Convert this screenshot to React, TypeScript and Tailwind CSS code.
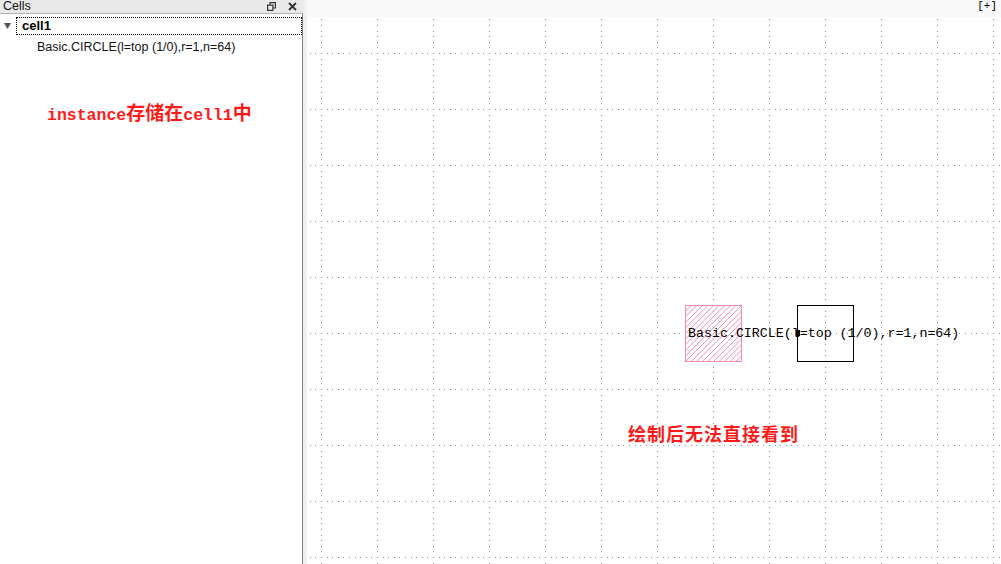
const GridPattern = () => (
  <svg className="absolute inset-0 h-full w-full" xmlns="http://www.w3.org/2000/svg">
    <defs>
      <pattern id="grid" x="14" y="36" width="56" height="56" patternUnits="userSpaceOnUse">
        {Array.from({ length: 10 }).map((_, i) => (
          <rect key={`v${i}`} x={0} y={Math.round(i * 5.6)} width={1} height={1} fill="#8a8a8a" />
        ))}
        {Array.from({ length: 10 }).map((_, i) => (
          <rect key={`h${i}`} x={Math.round(i * 5.6)} y={0} width={1} height={1} fill="#8a8a8a" />
        ))}
      </pattern>
    </defs>
    <rect width="100%" height="100%" fill="url(#grid)" />
  </svg>
);

const HatchBox = () => (
  <svg className="absolute left-[378px] top-[288px]" width="57" height="57">
    <defs>
      <clipPath id="boxclip">
        <rect x="0" y="0" width="57" height="57" />
      </clipPath>
    </defs>
    <g clipPath="url(#boxclip)" stroke="#f08cb0" strokeWidth="1">
      {Array.from({ length: 22 }).map((_, i) => {
        const x = -56 + i * 5.6;
        return <line key={i} x1={x} y1={57} x2={x + 57} y2={0} />;
      })}
    </g>
    <rect x="0.5" y="0.5" width="56" height="56" fill="none" stroke="#f08cb0" strokeWidth="1" />
  </svg>
);

const RestoreIcon = () => (
  <svg width="9" height="9" viewBox="0 0 9 9" fill="none" stroke="#333" strokeWidth="1.2">
    <rect x="0.6" y="3.1" width="5.3" height="5.3" />
    <path d="M3 3V0.6h5.4V6H6" />
  </svg>
);

const CloseIcon = () => (
  <svg width="9" height="9" viewBox="0 0 9 9" stroke="#333" strokeWidth="1.8">
    <path d="M1 1l7 7M8 1L1 8" />
  </svg>
);

const CellsPanel = () => (
  <div className="flex w-[303px] shrink-0 flex-col bg-white">
    <div className="flex h-[14px] items-center justify-between border-b border-[#b4b4b4] bg-[#e9e9e9] pl-[3px] pr-[6px]">
      <span className="text-[12.5px] leading-none text-[#111]">Cells</span>
      <div className="flex items-center gap-[12px]">
        <RestoreIcon />
        <CloseIcon />
      </div>
    </div>
    <div className="relative flex-1 border-r border-[#7f7f7f] pt-[3px]">
      <div className="flex items-center">
        <svg className="ml-[4px] mr-[5px]" width="7" height="6" viewBox="0 0 7 6">
          <path d="M0 0h7L3.5 6z" fill="#555" />
        </svg>
        <div className="h-[18px] flex-1 border border-dotted border-black pl-[5px] text-[13px] font-bold leading-[16px] text-black">
          cell1
        </div>
      </div>
      <div className="mt-[4px] pl-[37px] text-[12.5px] leading-[16px] text-[#111]">Basic.CIRCLE(l=top (1/0),r=1,n=64)</div>
      <div className="mt-[46px] pl-[47px] font-bold leading-[22px] text-[#ff1a1a]">
        <span className="font-['Liberation_Mono',monospace] text-[16.5px]">instance</span>
        <span className="font-['Noto_Sans_CJK_SC',sans-serif] text-[19px]">存储在</span>
        <span className="font-['Liberation_Mono',monospace] text-[16.5px]">cell1</span>
        <span className="font-['Noto_Sans_CJK_SC',sans-serif] text-[19px]">中</span>
      </div>
    </div>
  </div>
);

const Canvas = () => (
  <div className="flex flex-1 flex-col">
    <div className="flex h-[17px] shrink-0 justify-end bg-[#f8f8f8] pr-[4px]">
      <span className="font-['Liberation_Mono',monospace] text-[11px] leading-[12px] text-black">[+]</span>
    </div>
    <div className="relative flex-1 bg-white">
      <GridPattern />
      <HatchBox />
      <div className="absolute left-[490px] top-[288px] h-[57px] w-[57px] border border-black" />
      <div className="absolute left-[381px] top-[309px] whitespace-nowrap font-['Liberation_Mono',monospace] text-[13.3px] leading-[16px] text-black">
        Basic.CIRCLE(l=top (1/0),r=1,n=64)
      </div>
      <div className="absolute left-[489px] top-[313px] h-[6px] w-[4px] bg-black" />
      <div className="absolute left-[321px] top-[404px] whitespace-nowrap font-['Noto_Sans_CJK_SC',sans-serif] text-[18px] font-bold leading-[24px] tracking-[1px] text-[#ff1a1a]">
        绘制后无法直接看到
      </div>
    </div>
  </div>
);

export default function App() {
  return (
    <div className="flex h-[564px] w-[1001px] overflow-hidden bg-white font-['Liberation_Sans','Noto_Sans_CJK_SC',sans-serif]">
      <CellsPanel />
      <div className="w-[4px] shrink-0 bg-[#efefef]" />
      <Canvas />
    </div>
  );
}
